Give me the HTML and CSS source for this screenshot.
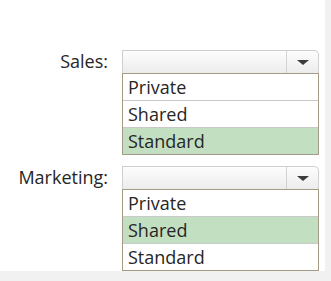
FILE: index.html
```html
<!DOCTYPE html>
<html lang="en">
<head>
    <meta charset="UTF-8">
    <meta name="viewport" content="width=device-width, initial-scale=1.0">
    <title>Dropdowns</title>
    <link rel="stylesheet" href="styles.css">
</head>
<body>

    <div class="panel">

        <div class="field">
            <label class="label">Sales:</label>
            <div class="combo">
                <div class="box">
                    <span class="value"></span>
                    <span class="btn"><i class="arrow"></i></span>
                </div>
                <ul class="list">
                    <li>Private</li>
                    <li>Shared</li>
                    <li class="current">Standard</li>
                </ul>
            </div>
        </div>

        <div class="field">
            <label class="label">Marketing:</label>
            <div class="combo">
                <div class="box">
                    <span class="value"></span>
                    <span class="btn"><i class="arrow"></i></span>
                </div>
                <ul class="list">
                    <li>Private</li>
                    <li class="current">Shared</li>
                    <li>Standard</li>
                </ul>
            </div>
        </div>

    </div>

</body>
</html>
```

FILE: styles.css
```css
body, div, ul, li {
  margin: 0;
  padding: 0;
}

ul {
  list-style-type: none;
}

body {
  background: #f1f1f1;
  font: 18px/22px "Open Sans", "Noto Sans", sans-serif;
  color: #262626;
}

.panel {
  width: 325px;
  height: 271px;
  background: #fff;
  padding-top: 50px;
  box-sizing: border-box;
  display: flex;
  flex-direction: column;
  gap: 11px;
}

.field {
  display: grid;
  grid-template-columns: 108px 197px;
  column-gap: 14px;
  align-items: start;
}

.label {
  text-align: right;
  line-height: 22px;
}

.box {
  display: flex;
  height: 22px;
  border: 1px solid #cfcfcf;
  border-bottom: none;
  border-radius: 0 5px 0 0;
  background: linear-gradient(#fdfdfd, #ececec);
}

.value {
  flex: 1;
}

.btn {
  width: 31px;
  border-left: 1px solid #d2d2d2;
  display: flex;
  align-items: center;
  justify-content: center;
}

.arrow {
  width: 0;
  height: 0;
  border-left: 6px solid transparent;
  border-right: 6px solid transparent;
  border-top: 5px solid #3c3c3c;
}

.list {
  border: 1px solid #a39b85;
  background: #fff;
}

.list li {
  height: 26px;
  line-height: 26px;
  padding-left: 5px;
  border-bottom: 1px solid #c9c9c9;
}

.list li:last-child {
  border-bottom: none;
}

.list li.current {
  background: #c3dfc1;
}
```
